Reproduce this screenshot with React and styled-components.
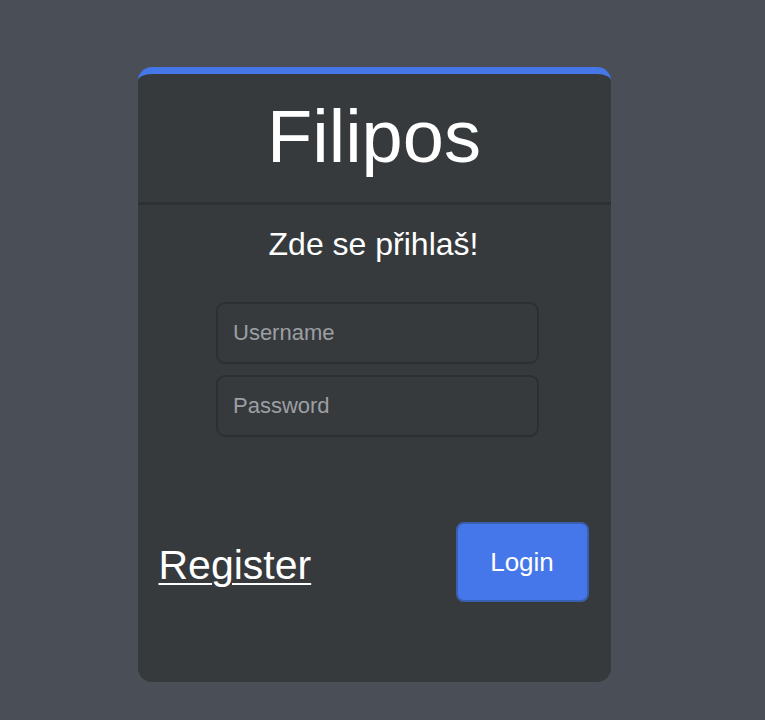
import React from "react";
import styled, { createGlobalStyle } from "styled-components";

const Global = createGlobalStyle`
  html, body { margin: 0; padding: 0; background: #4a4e56; }
  body { font-family: "Liberation Sans", Arial, sans-serif; min-height: 720px; }
`;

const Page = styled.div`
  width: 748px;
  display: flex;
  justify-content: center;
  padding-top: 67px;
`;

const Card = styled.div`
  width: 473px;
  height: 615px;
  box-sizing: border-box;
  background: #373a3d;
  border-top: 7px solid #4677e8;
  border-radius: 14px;
  display: flex;
  flex-direction: column;
`;

const Header = styled.div`
  height: 128px;
  border-bottom: 3px solid #2e3134;
  display: flex;
  align-items: center;
  justify-content: center;
`;

const Title = styled.h1`
  margin: 0;
  font-weight: 400;
  font-size: 74px;
  color: #ffffff;
  line-height: 1;
  padding-bottom: 2px;
`;

const Form = styled.form`
  flex: 1;
  display: flex;
  flex-direction: column;
  align-items: center;
  padding: 21px 22px 80px 21px;
`;

const Subtitle = styled.h2`
  margin: 0 0 39px;
  font-weight: 400;
  font-size: 32px;
  line-height: 1.15;
  color: #ffffff;
`;

const Fields = styled.div`
  display: flex;
  flex-direction: column;
  gap: 11px;
  margin-left: 8px;
`;

const Input = styled.input`
  width: 323px;
  height: 62px;
  box-sizing: border-box;
  background: #363a3d;
  border: 2px solid #2d3033;
  border-radius: 9px;
  padding: 0 15px;
  font-family: "Liberation Sans", Arial, sans-serif;
  font-size: 22px;
  color: #ffffff;
  outline: none;
  &::placeholder { color: #9c9fa3; }
`;

const Actions = styled.div`
  margin-top: auto;
  align-self: stretch;
  display: flex;
  align-items: center;
  justify-content: space-between;
`;

const RegisterLink = styled.a`
  font-size: 41px;
  color: #ffffff;
  text-decoration: underline;
  text-decoration-thickness: 2px;
  text-underline-offset: 4px;
  margin-top: 6px;
  cursor: pointer;
`;

const LoginButton = styled.button`
  width: 133px;
  height: 80px;
  background: #4677ea;
  border: 2px solid #3a5fae;
  border-radius: 8px;
  color: #ffffff;
  font-family: "Liberation Sans", Arial, sans-serif;
  font-size: 26px;
  cursor: pointer;
`;

export default function App() {
  return (
    <>
      <Global />
      <Page>
        <Card>
          <Header>
            <Title>Filipos</Title>
          </Header>
          <Form onSubmit={(e) => e.preventDefault()}>
            <Subtitle>Zde se přihlaš!</Subtitle>
            <Fields>
              <Input type="text" placeholder="Username" />
              <Input type="password" placeholder="Password" />
            </Fields>
            <Actions>
              <RegisterLink>Register</RegisterLink>
              <LoginButton type="submit">Login</LoginButton>
            </Actions>
          </Form>
        </Card>
      </Page>
    </>
  );
}
